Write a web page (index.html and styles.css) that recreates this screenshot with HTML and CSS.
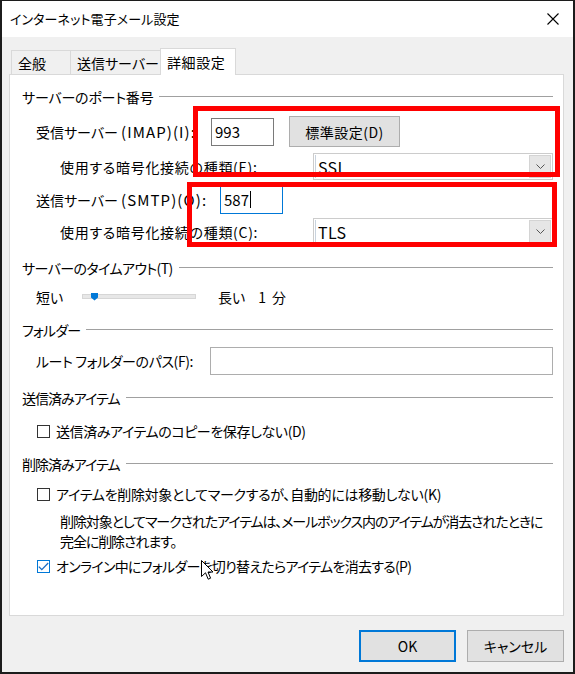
FILE: index.html
```html
<!DOCTYPE html>
<html lang="ja">
<head>
<meta charset="utf-8">
<title>インターネット電子メール設定</title>
<link rel="stylesheet" href="styles.css">
</head>
<body>
<div class="window">
  <div class="titlebar">
    <span class="title">インターネット電子メール設定</span>
    <svg class="close" width="12" height="12" viewBox="0 0 12 12"><path d="M0.5 0.5 L11.5 11.5 M11.5 0.5 L0.5 11.5" stroke="#000" stroke-width="1.1" fill="none"/></svg>
  </div>
  <div class="client">
    <div class="tabs">
      <div class="tab tab-general">全般</div>
      <div class="tab tab-outgoing">送信サーバー</div>
      <div class="tab tab-advanced selected">詳細設定</div>
    </div>
    <div class="panel">
      <div class="group-head head-ports">サーバーのポート番号</div>
      <div class="row row-imap">
        <span class="lbl lbl-imap">受信サーバー <span class="en">(IMAP)(I):</span></span>
        <div class="field port">993</div>
        <div class="btn btn-default">標準設定(D)</div>
      </div>
      <div class="row row-enc row-enc-in">
        <span class="lbl lbl-enc">使用する暗号化接続の種類(E):</span>
        <div class="combo"><span class="combo-text">SSL</span><span class="combo-arrow"><svg width="9" height="5" viewBox="0 0 9 5"><path d="M0.5 0.5 L4.5 4.5 L8.5 0.5" stroke="#555" fill="none"/></svg></span></div>
      </div>
      <div class="row row-smtp">
        <span class="lbl lbl-smtp">送信サーバー <span class="en">(SMTP)(O):</span></span>
        <div class="field port focused">587<span class="caret"></span></div>
      </div>
      <div class="row row-enc row-enc-out">
        <span class="lbl lbl-enc">使用する暗号化接続の種類(C):</span>
        <div class="combo"><span class="combo-text">TLS</span><span class="combo-arrow"><svg width="9" height="5" viewBox="0 0 9 5"><path d="M0.5 0.5 L4.5 4.5 L8.5 0.5" stroke="#555" fill="none"/></svg></span></div>
      </div>

      <div class="group-head head-timeout">サーバーのタイムアウト(T)</div>
      <div class="row row-slider">
        <span class="lbl lbl-short">短い</span>
        <div class="track"><span class="thumb"></span></div>
        <span class="lbl-long">長い</span>
        <span class="lbl-value">1 分</span>
      </div>

      <div class="group-head head-folder">フォルダー</div>
      <div class="row row-path">
        <span class="lbl lbl-path">ルート フォルダーのパス(F):</span>
        <div class="field path"></div>
      </div>

      <div class="group-head head-sent">送信済みアイテム</div>
      <div class="row row-check row-cb1">
        <span class="checkbox"></span>
        <span class="check-label">送信済みアイテムのコピーを保存しない(D)</span>
      </div>

      <div class="group-head head-deleted">削除済みアイテム</div>
      <div class="row row-check row-cb2">
        <span class="checkbox"></span>
        <span class="check-label">アイテムを削除対象としてマークするが、自動的には移動しない(K)</span>
      </div>
      <p class="note">削除対象としてマークされたアイテムは、メールボックス内のアイテムが消去されたときに<br>完全に削除されます。</p>
      <div class="row row-check row-cb3">
        <span class="checkbox checked"><svg width="11" height="9" viewBox="0 0 11 9"><path d="M0.8 4.6 L3.8 7.6 L10.2 1.0" stroke="#1a6cc4" stroke-width="1.3" fill="none"/></svg></span>
        <span class="check-label">オンライン中にフォルダーを切り替えたらアイテムを消去する(P)</span>
      </div>
    </div>
    <div class="buttons">
      <div class="btn btn-ok">OK</div>
      <div class="btn btn-cancel">キャンセル</div>
    </div>
  </div>

  <div class="mark mark-incoming"></div>
  <div class="mark mark-outgoing"></div>

  <svg class="pointer" width="13" height="21" viewBox="0 0 13 21"><path d="M0.5 0.5 L0.5 16.5 L4.5 12.8 L7.2 19.2 L9.6 18.2 L7 12 L12 12 Z" fill="#fff" stroke="#000" stroke-width="1" stroke-linejoin="miter"/></svg>
</div>
</body>
</html>
```
FILE: styles.css
```css
html, body {
  margin: 0;
  padding: 0;
  background: #ffffff;
}

.window {
  position: relative;
  width: 575px;
  height: 674px;
  box-sizing: border-box;
  border-style: solid;
  border-color: #1c1c1c;
  border-width: 1px 2px 2px 2px;
  display: flex;
  flex-direction: column;
  font-family: "Noto Sans CJK JP", "Noto Sans", sans-serif;
  font-size: 14px;
  font-feature-settings: "palt";
  color: #000;
  overflow: hidden;
}

/* title bar */
.titlebar {
  height: 36px;
  flex: none;
  background: #fff;
  display: flex;
  align-items: center;
  padding-left: 8px;
}

.title {
  font-size: 13px;
  line-height: 20px;
  letter-spacing: 0.1px;
}

.close {
  margin-left: auto;
  margin-right: 14px;
}

/* dialog client area */
.client {
  flex: 1;
  background: #f0f0f0;
  padding: 11px 0 0 7px;
  display: flex;
  flex-direction: column;
}

.tabs {
  display: flex;
  align-items: flex-end;
  height: 26px;
  padding-left: 2px;
}

.tab {
  box-sizing: border-box;
  height: 24px;
  border: 1px solid #d9d9d9;
  border-bottom: none;
  background: #f0f0f0;
  padding-left: 6px;
  line-height: 25px;
  white-space: nowrap;
}

.tab-general {
  width: 60px;
}

.tab-outgoing {
  width: 92px;
  border-left: none;
}

.tab.selected {
  position: relative;
  z-index: 2;
  width: 76px;
  height: 27px;
  margin-left: -3px;
  margin-bottom: -1px;
  padding-left: 6px;
  background: #fff;
  line-height: 26px;
  letter-spacing: 0.6px;
}

.panel {
  box-sizing: border-box;
  width: 555px;
  height: 542px;
  border: 1px solid #d9d9d9;
  background: #fff;
  padding: 0 10px 0 12px;
  display: flex;
  flex-direction: column;
}

/* group headings with a rule */
.group-head {
  display: flex;
  align-items: center;
  height: 22px;
  line-height: 22px;
  white-space: nowrap;
}

.group-head::after {
  content: "";
  flex: 1;
  height: 1px;
  background: #a0a0a0;
  margin-left: 6px;
  margin-top: -2px;
}

.head-ports { margin-top: 11px; letter-spacing: -0.2px; }
.head-timeout { margin-top: 12px; letter-spacing: -0.6px; }
.head-folder { margin-top: 11px; letter-spacing: -0.8px; }
.head-sent { margin-top: 12px; letter-spacing: -1px; }
.head-deleted { margin-top: 11px; letter-spacing: -1px; }

.row {
  display: flex;
  align-items: center;
  white-space: nowrap;
}

.lbl {
  flex: none;
  line-height: 20px;
}

.en {
  font-size: 15px;
  letter-spacing: 1.1px;
}

/* port rows */
.row-imap {
  margin-top: 8px;
  height: 31px;
  padding-left: 14px;
}

.lbl-imap { width: 175px; }
.lbl-smtp { width: 184px; }
.lbl-enc { width: 253px; letter-spacing: 0.7px; }

.row-smtp {
  margin-top: 6px;
  height: 27px;
  padding-left: 14px;
}

.row-enc {
  height: 27px;
  padding-left: 38px;
}

.row-enc-in { margin-top: 6px; }
.row-enc-out { margin-top: 5px; }

.field {
  box-sizing: border-box;
  background: #fff;
  border: 1px solid #7a7a7a;
  padding-left: 3px;
  display: flex;
  align-items: center;
  font-size: 15px;
}

.field.port {
  width: 63px;
  height: 28px;
}

.field.focused {
  border-color: #0078d7;
}

.caret {
  display: inline-block;
  width: 1px;
  height: 17px;
  background: #000;
  margin-left: 1px;
}

.btn {
  box-sizing: border-box;
  background: #e1e1e1;
  border: 1px solid #adadad;
  display: flex;
  align-items: center;
  justify-content: center;
  white-space: nowrap;
}

.btn-default {
  width: 111px;
  height: 31px;
  margin-left: 15px;
  letter-spacing: 0.5px;
}

/* drop-down lists */
.combo {
  box-sizing: border-box;
  width: 240px;
  height: 27px;
  border: 1px solid #cccccc;
  background: #fff;
  display: flex;
  align-items: stretch;
  padding: 1px;
  font-size: 16px;
}

.combo-text {
  flex: 1;
  border-left: 1px solid #c9d3de;
  padding-left: 2px;
  display: flex;
  align-items: center;
  letter-spacing: 0.3px;
}

.combo-arrow {
  box-sizing: border-box;
  width: 22px;
  background: #e6e6e6;
  border: 1px solid #d4d4d4;
  display: flex;
  align-items: center;
  justify-content: center;
}

/* timeout slider */
.row-slider {
  margin-top: 7px;
  height: 22px;
  padding-left: 14px;
}

.lbl-short { width: 46px; }

.track {
  position: relative;
  box-sizing: border-box;
  width: 114px;
  height: 5px;
  background: #e7e7e7;
  border: 1px solid #d6d6d6;
  margin-top: -2px;
}

.thumb {
  position: absolute;
  left: 8px;
  top: -2px;
  width: 7px;
  height: 8px;
  background: #0078d7;
  clip-path: polygon(0 0, 100% 0, 100% 62%, 50% 100%, 0 62%);
}

.lbl-long { margin-left: 22px; }
.lbl-value { margin-left: 13px; word-spacing: 3px; }

/* root folder path */
.row-path {
  margin-top: 6px;
  height: 28px;
  padding-left: 14px;
}

.lbl-path { width: 174px; letter-spacing: -0.4px; }

.field.path {
  flex: 1;
  height: 28px;
  border-color: #adadad;
}

/* check boxes */
.row-check {
  height: 22px;
  padding-left: 15px;
}

.row-cb1 { margin-top: 11px; }
.row-cb2 { margin-top: 8px; }
.row-cb3 { margin-top: 4px; }

.row-cb1 .check-label { letter-spacing: -0.4px; }
.row-cb2 .check-label { letter-spacing: -0.3px; }
.row-cb3 .check-label { letter-spacing: -0.7px; }

.checkbox {
  box-sizing: border-box;
  flex: none;
  width: 13px;
  height: 13px;
  border: 1px solid #333;
  background: #fff;
  display: flex;
  align-items: center;
  justify-content: center;
}

.checkbox.checked {
  border-color: #0078d7;
}

.check-label {
  margin-left: 6px;
  line-height: 20px;
}

.note {
  margin: 6px 0 0 0;
  padding-left: 38px;
  line-height: 20px;
  white-space: nowrap;
  letter-spacing: -1.1px;
}

/* dialog buttons */
.buttons {
  display: flex;
  justify-content: flex-end;
  gap: 11px;
  margin-top: 14px;
  padding-right: 9px;
}

.btn-ok,
.btn-cancel {
  width: 97px;
  height: 32px;
}

.btn-ok {
  border: 2px solid #0078d7;
}

/* red highlight frames drawn over the dialog */
.mark {
  position: absolute;
  box-sizing: border-box;
  border: 5px solid #ff0000;
  pointer-events: none;
}

.mark-incoming {
  left: 191px;
  top: 105px;
  width: 367px;
  height: 71px;
}

.mark-outgoing {
  left: 185px;
  top: 181px;
  width: 370px;
  height: 65px;
}

.pointer {
  position: absolute;
  left: 199px;
  top: 559px;
}
```
